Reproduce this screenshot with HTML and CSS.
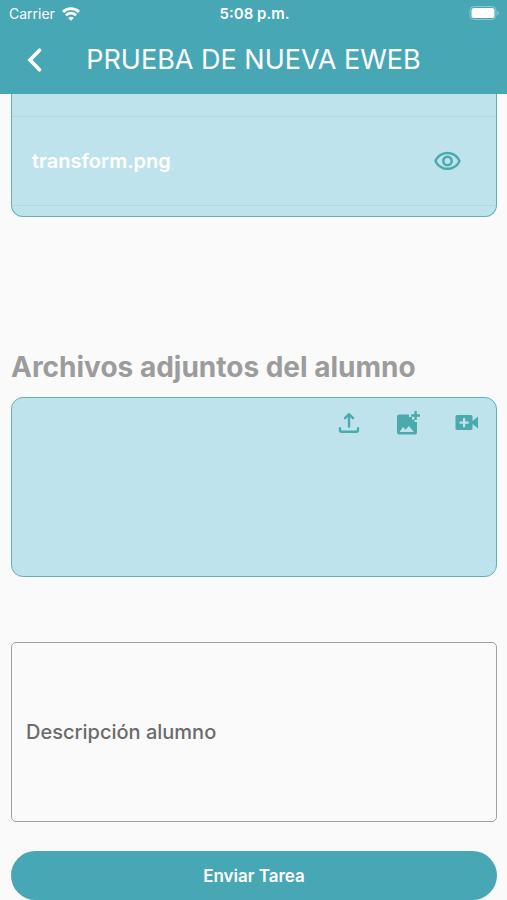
FILE: index.html
```html
<!doctype html>
<html lang="es">
  <head>
    <meta charset="utf-8">
    <meta name="viewport" content="width=device-width, initial-scale=1">

    <title>Prueba de nueva eweb</title>

    <link rel="stylesheet" href="styles.css">
  </head>
  <body>

  <header class="top">
    <div class="status">
      <span class="carrier">
        Carrier
        <svg width="18" height="14" viewBox="0 0 18 14" fill="none" stroke="#fff" stroke-width="2.8">
          <path d="M1 4.900a11.400 11.400 0 0 1 16 0"/>
          <path d="M3.900 8.300a7.200 7.200 0 0 1 10.200 0"/>
          <path d="M9 13.800L6.200 11a4 4 0 0 1 5.600 0z" fill="#fff" stroke="none"/>
        </svg>
      </span>
      <span class="time">5:08 p.m.</span>
      <svg class="battery" width="31" height="15" viewBox="0 0 31 15">
        <rect x="1" y=".5" width="26" height="13" rx="4" fill="none" stroke="#fff" stroke-opacity=".35"/>
        <rect x="2.5" y="2" width="23" height="10" rx="2.500" fill="#fff"/>
        <path d="M28.5 5v4q1.500-.6 1.500-2t-1.500-2z" fill="#fff" fill-opacity=".4"/>
      </svg>
    </div>
    <div class="nav">
      <button type="button" class="back" aria-label="Atrás">
        <svg width="16" height="24" viewBox="0 0 16 24" fill="none" stroke="#fff" stroke-width="3.6" stroke-linecap="round">
          <path d="M12.500 2.200L3 12l9.500 9.800"/>
        </svg>
      </button>
      <h1>PRUEBA DE NUEVA EWEB</h1>
    </div>
  </header>

  <main>
    <section class="box files">
      <div class="file">
        <span>transform.png</span>
        <button type="button" class="icon" aria-label="Ver">
          <svg width="29" height="29" viewBox="0 0 24 24">
            <path d="M12 6c3.79 0 7.17 2.13 8.82 5.5C19.17 14.87 15.79 17 12 17s-7.17-2.13-8.82-5.5C4.83 8.13 8.21 6 12 6m0-2C7 4 2.73 7.11 1 11.5 2.73 15.89 7 19 12 19s9.27-3.11 11-7.5C21.27 7.11 17 4 12 4zm0 5c1.38 0 2.5 1.12 2.5 2.5S13.38 14 12 14s-2.5-1.12-2.5-2.5S10.62 9 12 9m0-2c-2.48 0-4.5 2.02-4.5 4.5S9.52 16 12 16s4.5-2.02 4.5-4.5S14.48 7 12 7z"/>
          </svg>
        </button>
      </div>
    </section>

    <h2>Archivos adjuntos del alumno</h2>
    <section class="box upload">
      <button type="button" class="icon" aria-label="Subir archivo">
        <svg width="24" height="24" viewBox="0 0 24 24" fill="none" stroke-width="2.4" stroke-linecap="round" stroke-linejoin="round" class="line">
          <path d="M12 15.500V3.500M8 7.200L12 3.200l4 4M3 17.200V19q0 1.800 1.800 1.800h14.400Q21 20.800 21 19v-1.800"/>
        </svg>
      </button>
      <button type="button" class="icon" aria-label="Agregar imagen">
        <svg width="26" height="26" viewBox="0 0 26 26">
          <path d="M14 4.500H4a2 2 0 0 0-2 2v16a2 2 0 0 0 2 2h16a2 2 0 0 0 2-2V12h-2.500V9.500H17V7h-3zM4.500 22l3.500-5 2.500 2.800 3.500-3.800L18.800 22z"/>
          <path d="M19.400 1h2.400v3.300H25v2.400h-3.200V10h-2.400V6.700h-3.300V4.300h3.300z"/>
        </svg>
      </button>
      <button type="button" class="icon" aria-label="Agregar video">
        <svg width="24" height="18" viewBox="0 0 24 18">
          <path d="M2 1h14a1.500 1.500 0 0 1 1.500 1.500v4.500L23 2.500v12L17.500 10v4.500A1.500 1.500 0 0 1 16 16H2a1.500 1.500 0 0 1-1.500-1.500v-12A1.500 1.500 0 0 1 2 1zM8 4v3.500H4.500v2.200H8v3.500h2.200V9.700h3.500V7.500h-3.500V4z"/>
        </svg>
      </button>
    </section>

    <form>
      <div class="field">
        <label for="descripcion">Descripción alumno</label>
        <textarea id="descripcion"></textarea>
      </div>
      <button type="submit" class="send">Enviar Tarea</button>
    </form>
  </main>

  </body>
</html>
```
FILE: styles.css
```css
* {
  box-sizing: border-box;
}

body {
  margin: 0;
  background-color: #fafafa;
  font-family: Inter, "Liberation Sans", sans-serif;
  font-weight: 500;
}

button {
  padding: 0;
  border: 0;
  background: none;
  font: inherit;
}

svg {
  display: block;
}

.top {
  height: 94px;
  background-color: #48a7b5;
  color: white;
}

.status {
  display: grid;
  grid-template-columns: 1fr auto 1fr;
  align-items: center;
  height: 27px;
  padding: 0 7px 0 9px;
  font-size: 14px;
}

.carrier {
  display: flex;
  align-items: center;
  gap: 7px;
  font-weight: 400;
}

.time {
  font-size: 15px;
  font-weight: 600;
}

.battery {
  justify-self: end;
}

.nav {
  display: grid;
  grid-template-columns: 70px 1fr 70px;
  align-items: center;
  height: 65px;
}

.back {
  display: flex;
  justify-content: center;
}

h1 {
  margin: 0;
  font-size: 27px;
  font-weight: 400;
  text-align: center;
  white-space: nowrap;
}

main {
  padding: 0 10px 0 11px;
}

.box {
  border: 1px solid #5eb3b8;
  border-radius: 12px;
  background-color: #bfe3ec;
}

.files {
  padding: 22px 0 10px;
  border-top: 0;
  border-radius: 0 0 12px 12px;
}

.file {
  display: flex;
  justify-content: space-between;
  align-items: center;
  height: 90px;
  padding: 0 34px 0 20px;
  border-top: 1px solid #b2d8e1;
  border-bottom: 1px solid #b2d8e1;
  color: white;
  font-size: 20px;
  font-weight: 600;
}

.icon {
  fill: #4aaaac;
}

.line {
  stroke: #4aaaac;
}

h2 {
  margin: 133px 0 13px;
  color: #9c9c9c;
  font-size: 28px;
  font-weight: 700;
  line-height: 34px;
}

.upload {
  display: flex;
  justify-content: flex-end;
  align-items: flex-start;
  gap: 34px;
  height: 180px;
  padding: 12px 17px;
}

.upload .icon {
  display: flex;
  align-items: center;
  height: 26px;
}

.field {
  display: grid;
  margin: 65px 0 29px;
}

.field label,
.field textarea {
  grid-area: 1 / 1;
}

.field label {
  align-self: center;
  padding-left: 15px;
  color: #6b6b6b;
  font-size: 20px;
}

.field textarea {
  width: 100%;
  height: 180px;
  padding: 15px;
  border: 1px solid #a0a0a0;
  border-radius: 5px;
  background: transparent;
  font: inherit;
  resize: none;
}

.send {
  display: block;
  width: 100%;
  height: 49px;
  border-radius: 25px;
  background-color: #48a7b5;
  color: white;
  font-size: 17px;
  font-weight: 600;
}
```
